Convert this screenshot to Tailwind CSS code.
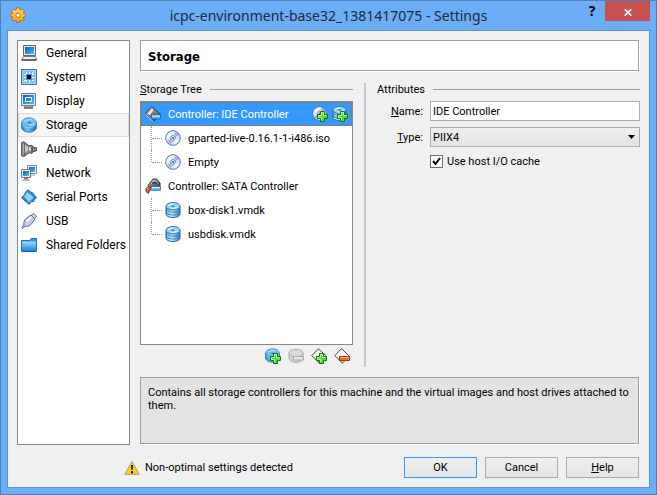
<!DOCTYPE html>
<html lang="en">
<head>
<meta charset="utf-8">
<title>icpc-environment-base32_1381417075 - Settings</title>
<script src="https://cdn.jsdelivr.net/npm/@tailwindcss/browser@4"></script>
</head>
<body class="flex min-h-screen flex-col border border-[#4c82c0] bg-[#6badf6] font-[Roboto,sans-serif] text-[11px] leading-[13px] text-black">

<!-- Shared icon shapes -->
<svg class="absolute size-0" aria-hidden="true">
  <defs>
    <linearGradient id="blue" x1="0" y1="0" x2="1" y2="1"><stop offset="0" stop-color="#0a5cc0"/><stop offset="1" stop-color="#4fc0ff"/></linearGradient>
    <linearGradient id="sky" x1="0" y1="0" x2="0" y2="1"><stop offset="0" stop-color="#9adcfb"/><stop offset="1" stop-color="#1c82d4"/></linearGradient>
    <linearGradient id="pale" x1="0" y1="0" x2="1" y2="0"><stop offset="0" stop-color="#4da6df"/><stop offset=".45" stop-color="#b4e4fd"/><stop offset="1" stop-color="#2f86c6"/></linearGradient>
    <linearGradient id="drumside" x1="0" y1="0" x2="1" y2="0"><stop offset="0" stop-color="#2a86d0"/><stop offset=".4" stop-color="#6cc4f6"/><stop offset="1" stop-color="#1a6cb8"/></linearGradient>
    <linearGradient id="metal" x1="0" y1="0" x2="1" y2="1"><stop offset="0" stop-color="#e4e4e4"/><stop offset=".5" stop-color="#777"/><stop offset="1" stop-color="#333"/></linearGradient>
    <linearGradient id="disc" x1="0" y1="0" x2="1" y2="1"><stop offset="0" stop-color="#bfe0fa"/><stop offset=".3" stop-color="#f2fbff"/><stop offset=".5" stop-color="#cdb9ee"/><stop offset=".75" stop-color="#e9f5ff"/><stop offset="1" stop-color="#8fc0ea"/></linearGradient>
    <linearGradient id="gold" x1="0" y1="0" x2="0" y2="1"><stop offset="0" stop-color="#ffe27a"/><stop offset="1" stop-color="#f29a12"/></linearGradient>
    <symbol id="plus" viewBox="0 0 11 11"><path d="M3.5.5h4v3h3v4h-3v3h-4v-3h-3v-4h3z" fill="#4fd83c" stroke="#14780f"/><path d="M4.5 9V6.5h-3v-2h3v-3h2v3h3" fill="none" stroke="#b4fba3"/></symbol>
    <symbol id="cd" viewBox="0 0 16 16"><circle cx="8" cy="8" r="7.3" fill="url(#disc)" stroke="#4379b4"/><path d="M3.2 3.6 6.6 7M9.6 9.2l3 3" stroke="#fff" stroke-width="2"/><path d="M4 10.5a5 5 0 0 0 2.5 2.3M10 3.2a5 5 0 0 1 2.7 2.6" stroke="#a58be0" fill="none" stroke-width="1.4"/><circle cx="8" cy="8" r="2.4" fill="#e9f6ff" stroke="#5c93c8"/><circle cx="8" cy="8" r="1" fill="#28578c"/></symbol>
    <symbol id="stack" viewBox="0 0 16 16"><path d="M1 4v8.2C1 14 4 15.5 8 15.5s7-1.5 7-3.3V4z" fill="url(#pale)" stroke="#2b6ca6"/><path d="M1 7.2C1 9 4 10.3 8 10.3s7-1.3 7-3.1M1 10C1 11.8 4 13 8 13s7-1.2 7-3" fill="none" stroke="#2b6ca6" stroke-width=".8"/><path d="M2 9.3c1 1.2 3 1.9 6 1.9M2 12.2c1 1.3 3 1.9 6 1.9" fill="none" stroke="#d5f1ff" stroke-width=".7"/><ellipse cx="8" cy="4.2" rx="7" ry="3.7" fill="#94d4f8" stroke="#347cae"/><path d="M3 3.8C4.5 2.2 7 2 9 2.2M6 6.2c3 .3 5-.3 6.5-1.5" stroke="#eafaff" fill="none"/><ellipse cx="8" cy="4.2" rx="1.6" ry=".8" fill="#1f6ca8"/></symbol>
    <symbol id="drum" viewBox="0 0 16 16"><path d="M.6 5.5v4.8C.6 13 4 15.2 8 15.2s7.4-2.2 7.4-4.9V5.5z" fill="url(#drumside)" stroke="#1f68a8" stroke-width=".8"/><ellipse cx="8" cy="5.4" rx="7.3" ry="4.6" fill="#6dbdf2" stroke="#3c87c2" stroke-width=".7"/><path d="M1 7.5c1.2 2 4 3.2 7 3.2s6-1.2 7-3.2" fill="none" stroke="#b5e6ff" stroke-width=".7"/><path d="M3 4.7C5 2.6 9 2.4 11 3M8 8.3c3 0 5-1 5.8-2.3" fill="none" stroke="#c9edff"/><ellipse cx="8.6" cy="5.6" rx="1.8" ry=".9" fill="#2a7cc0"/></symbol>
    <symbol id="ide" viewBox="0 0 16 16"><path d="M.5 7.5 6.7.6 15.3 8.4 8.5 15.3z" fill="url(#metal)" stroke="#333"/><path d="M2.8 7.4 6.8 2.7l1.8 1.6L4.6 9z" fill="#eaeaea"/><path d="m8 3.5 5 4.5" stroke="#999"/><path d="M.8 8.5 8.3 15.6" stroke="#fff" stroke-width=".8"/><path d="M6.5 8.9h9v3.8h-9z" fill="#e5f8ff" stroke="#1873b8"/><path d="M7 10.6h8v1.6H7z" fill="#48b5f0"/></symbol>
    <symbol id="diamond" viewBox="0 0 16 16"><path d="M.7 7.7 7.5.8 15.3 8 8.3 15.3z" fill="#fcfcfc" stroke="#444"/><path d="m1.8 8.4 6.4 6" stroke="#999"/></symbol>
  </defs>
</svg>

<header class="grid h-[29px] shrink-0 grid-cols-[1fr_auto_1fr]">
  <svg class="ml-[9px] mt-[6px] size-4" viewBox="0 0 16 16"><path d="m6.7.8 2.6 0 .4 1.9 1.2.5 1.7-1.1 1.6 1.7-1 1.7.5 1.2 2 .4v2.2l-2 .5-.5 1.1 1.1 1.8-1.7 1.6-1.7-1.1-1.2.5-.4 1.9H6.7l-.4-1.9-1.2-.5-1.8 1.1-1.6-1.6 1.1-1.8-.5-1.1-1.9-.5V7.1l1.9-.4.5-1.2-1.1-1.7 1.6-1.7 1.8 1.1 1.2-.5z" fill="url(#gold)" stroke="#ad6208" stroke-width=".8"/><circle cx="8" cy="8.2" r="2.2" fill="#fff6df" stroke="#b87418"/></svg>
  <h1 class="pt-[5px] font-['Noto_Sans',sans-serif] text-sm leading-5 text-[#1b2a3c]">icpc-environment-base32_1381417075 - Settings</h1>
  <div class="flex items-start justify-end pr-[6px]">
    <button class="h-5 w-[26px] text-center font-['Open_Sans',sans-serif] text-sm font-bold leading-5" aria-label="Help on window">?</button>
    <button class="flex h-5 w-[45px] items-center justify-center bg-[#c75050]" aria-label="Close">
      <svg class="mt-[2px] h-[7px] w-2" viewBox="0 0 8 7"><path d="M.8.3 7.2 6.7M7.2.3.8 6.7" stroke="#fff" stroke-width="1.7"/></svg>
    </button>
  </div>
</header>

<main class="mx-[6px] mb-[6px] flex flex-1 flex-col border border-[#5a93d2] bg-[#f0f0f0] p-[9px]">
  <div class="flex flex-1 gap-[10px]">
    <nav class="w-[113px] shrink-0 border border-[#828790] bg-white text-xs">
      <ul>
        <li><a href="#general" class="flex h-6 items-center gap-[9px] border border-transparent pl-[2px]">
          <svg class="size-4" viewBox="0 0 16 16"><path d="M2.5.5h12v10h-12z" fill="#e8e8e8" stroke="#666"/><path d="M4 2h9v7H4z" fill="url(#blue)"/><path d="M2.5 11.5h12l1 3H.7z" fill="#eee" stroke="#777"/><path d="M.5 15.3h15" stroke="#444"/></svg>General</a></li>
        <li><a href="#system" class="flex h-6 items-center gap-[9px] border border-transparent pl-[2px]">
          <svg class="size-4" viewBox="0 0 16 16"><path d="M.5.5h15v15H.5z" fill="#84bdf0" stroke="#3d70ae"/><path d="M1.5 1.5h13v13h-13z" fill="none" stroke="#a5d2fa"/><path d="M3 5.5h2M3 8.5h2M3 11.5h2M11 5.5h2M11 8.5h2M11 11.5h2M5.5 3v2M8.5 3v2M11.500 3v2M5.500 11v2M8.500 11v2" stroke="#fff"/><path d="M5 5h6v6H5z" fill="#4e8fd8"/><path d="M6 6h4v4H6z" fill="#071327"/></svg>System</a></li>
        <li><a href="#display" class="flex h-6 items-center gap-[9px] border border-transparent pl-[2px]">
          <svg class="size-4" viewBox="0 0 16 16"><path d="M.5.5h14v12H.5z" fill="#e7e7e7" stroke="#777"/><path d="M2 2h11v9H2z" fill="url(#blue)"/><path d="M4.500 4.500h6v4h-6z" fill="#2f83dc" stroke="#fff"/><path d="M4.5 12.5h6l1.500 2H3z" fill="#aaa" stroke="#777"/><path d="M3 15.2h9" stroke="#555"/></svg>Display</a></li>
        <li><a href="#storage" aria-current="page" class="flex h-6 items-center gap-[9px] border border-[#dedede] bg-[#f5f5f5] pl-[2px]">
          <svg class="size-4"><use href="#drum"/></svg>Storage</a></li>
        <li><a href="#audio" class="flex h-6 items-center gap-[9px] border border-transparent pl-[2px]">
          <svg class="size-4" viewBox="0 0 16 16"><path d="M.7 1.500 3 .8l5 4 3-.5.8 1.700 3.700.8v3l-3.700.9-.8 1.600-3-.5-5 3.700-2.300-.7z" fill="#8c8c8c" stroke="#4d4d4d"/><path d="M2 2.500v11l5-4.200V6.200z" fill="#c9c9c9"/><path d="M3.300 2v12" stroke="#555"/><path d="M8 6.500h2v3H8z" fill="#ddd"/><path d="M11 6v4.500" stroke="#333"/></svg>Audio</a></li>
        <li><a href="#network" class="flex h-6 items-center gap-[9px] border border-transparent pl-[2px]">
          <svg class="size-4" viewBox="0 0 16 16"><path d="M6.5.5h9v8h-9z" fill="#eee" stroke="#888"/><path d="M8 2h6v5H8z" fill="url(#blue)"/><path d="M9 9.5h5v1H9z" fill="#999"/><path d="M.5 4.5h9v8h-9z" fill="#eee" stroke="#777"/><path d="M2 6h6v5H2z" fill="url(#blue)"/><path d="M3 13h4v1H3zM1.5 14.5h7v1h-7z" fill="#777"/></svg>Network</a></li>
        <li><a href="#serial" class="flex h-6 items-center gap-[9px] border border-transparent pl-[2px]">
          <svg class="size-4" viewBox="0 0 16 16"><path d="M4.500 3 7.300.8l1.500 1.600 3 1.600 3.700 5-2.200 1-.6 2.700-2.400-.3-2 3L5.200 13 .6 8.500 3.500 6z" fill="#318acd" stroke="#285f94"/><path d="m6 3 6.800 5.500-4.300 5L2.800 7.700z" fill="#75c3f5"/><path d="m5.700 5 4.500 4.500M4.400 6.800l4 4.200M8 4.800l3 3" stroke="#c5ecff"/></svg>Serial Ports</a></li>
        <li><a href="#usb" class="flex h-6 items-center gap-[9px] border border-transparent pl-[2px]">
          <svg class="size-4" viewBox="0 0 16 16"><path d="m10 2.700 2.800-2.200 2.700 2.700-2.300 2.700z" fill="#ddd" stroke="#666"/><path d="M5 5.500 10 2l4 4-4 5.500c-2 2-4.500 2-5.800 1.800L1.500 15.500.7 14.700 3 12c-.5-2 .2-4.700 2-6.500z" fill="#c8cdee" stroke="#62668d"/><path d="M5.500 7.300 9.700 3.600l1 1L6 9.500z" fill="#fff"/></svg>USB</a></li>
        <li><a href="#shared" class="flex h-6 items-center gap-[9px] border border-transparent pl-[2px]">
          <svg class="size-4" viewBox="0 0 16 16"><path d="M.5 3.500h8l1.500-2h5.500V14H.5z" fill="#3c9ce2" stroke="#2170b4"/><path d="M1 4.500h14V14H1z" fill="url(#sky)"/><path d="M.5 14.500h15" stroke="#1c62a5"/></svg><span class="whitespace-nowrap">Shared Folders</span></a></li>
      </ul>
    </nav>

    <div class="flex min-w-0 flex-1 flex-col">
      <h2 class="mr-px h-[31px] border border-[#a0a0a0] bg-white pl-[7px] font-['DejaVu_Sans_Condensed','DejaVu_Sans',sans-serif] text-[13px] font-bold leading-[31px] shadow-[1px_1px_0_#fff]">Storage</h2>

      <div class="grid flex-1 grid-cols-[213fr_2px_263fr] gap-[11px] pb-[10px] pt-3">
        <section class="flex flex-col pb-[3px]">
          <h3 class="flex items-center gap-2"><span><u>S</u>torage Tree</span><span class="h-px flex-1 bg-[#a0a0a0]"></span></h3>
          <div class="mt-[5px] flex-1 border border-[#828790] bg-white">
            <ul>
              <li>
                <div class="flex h-6 items-center border border-dotted border-[#cc6600] bg-[#3399ff] px-[3px] text-white">
                  <svg class="mr-[7px] size-4"><use href="#ide"/></svg>
                  <span class="flex-1">Controller: IDE Controller</span>
                  <button class="mr-1 size-4" aria-label="Add CD/DVD device"><svg class="size-4" viewBox="0 0 16 16"><use href="#cd" width="15" height="15"/><use href="#plus" x="5" y="5" width="11" height="11"/></svg></button>
                  <button class="size-4" aria-label="Add hard disk"><svg class="size-4" viewBox="0 0 16 16"><use href="#stack" width="15" height="15"/><use href="#plus" x="5" y="5" width="11" height="11"/></svg></button>
                </div>
                <ul class="pl-[10px]">
                  <li class="flex h-6 items-center">
                    <span class="h-full border-l border-dotted border-[#999]"></span><span class="mr-[3px] w-[10px] border-t border-dotted border-[#999]"></span>
                    <svg class="mr-[7px] size-4"><use href="#cd"/></svg>gparted-live-0.16.1-1-i486.iso</li>
                  <li class="flex h-6 items-center">
                    <span class="h-3 self-start border-l border-dotted border-[#999]"></span><span class="mr-[3px] w-[10px] border-t border-dotted border-[#999]"></span>
                    <svg class="mr-[7px] size-4"><use href="#cd"/></svg>Empty</li>
                </ul>
              </li>
              <li>
                <div class="flex h-6 items-center pl-1">
                  <svg class="mr-[7px] size-4" viewBox="0 0 16 16"><path d="M3 7.500 8 1h3.500L15 5v5H5z" fill="url(#metal)" stroke="#333"/><path d="m6 6 2.500-3.300h2L13 5.500" fill="none" stroke="#bbb"/><path d="M7 5h5" stroke="#222"/><path d="M6.500 8.500h8.800v3.800H5.500z" fill="#e7f8ff" stroke="#1873b8"/><path d="M6.500 10.200H15v1.600H6z" fill="#3ba6e8"/><path d="M1 10.500 3.700 8.300l2 2.200-1.400 2.200L3.500 15.500 1 13.600z" fill="#e95625" stroke="#97300f"/><path d="m2 11 1.700-1.300" stroke="#ffb08f"/></svg>Controller: SATA Controller</div>
                <ul class="pl-[10px]">
                  <li class="flex h-6 items-center">
                    <span class="h-full border-l border-dotted border-[#999]"></span><span class="mr-[3px] w-[10px] border-t border-dotted border-[#999]"></span>
                    <svg class="mr-[7px] size-4"><use href="#stack"/></svg>box-disk1.vmdk</li>
                  <li class="flex h-6 items-center">
                    <span class="h-3 self-start border-l border-dotted border-[#999]"></span><span class="mr-[3px] w-[10px] border-t border-dotted border-[#999]"></span>
                    <svg class="mr-[7px] size-4"><use href="#stack"/></svg>usbdisk.vmdk</li>
                </ul>
              </li>
            </ul>
          </div>
          <div class="mt-[3px] flex justify-end gap-[7px] pr-[3px]">
            <button class="size-4" aria-label="Add attachment"><svg class="size-4" viewBox="0 0 16 16"><use href="#drum" width="15" height="15"/><use href="#plus" x="5" y="5" width="11" height="11"/></svg></button>
            <button class="size-4" aria-label="Remove attachment" disabled><svg class="size-4" viewBox="0 0 16 16"><path d="M1 5v5c0 2.500 3 4.300 7 4.300s7-1.800 7-4.300V5z" fill="#d0d0d0" stroke="#aaa"/><ellipse cx="8" cy="5" rx="7" ry="3.700" fill="#dcdcdc" stroke="#b0b0b0"/><path d="M5.500 8.500h10v3.500h-10z" fill="#e8e8e8" stroke="#aaa"/></svg></button>
            <button class="size-4" aria-label="Add controller"><svg class="size-4" viewBox="0 0 16 16"><use href="#diamond" width="16" height="16"/><use href="#plus" x="5" y="5" width="11" height="11"/></svg></button>
            <button class="size-4" aria-label="Remove controller"><svg class="size-4" viewBox="0 0 16 16"><use href="#diamond" width="16" height="16"/><path d="M5.500 8.500h10v4h-10z" fill="#f2682e" stroke="#b53a0c"/><path d="M6.500 9.500h8" stroke="#ffb28f"/></svg></button>
          </div>
        </section>

        <div class="bg-[#c8c8c8]"></div>

        <section>
          <h3 class="flex items-center gap-2">Attributes<span class="h-px flex-1 bg-[#a0a0a0]"></span></h3>
          <div class="mt-[5px] grid grid-cols-[46px_1fr] items-center gap-x-[7px] gap-y-[6px]">
            <label for="name" class="text-right"><u>N</u>ame:</label>
            <input id="name" type="text" value="IDE Controller" class="h-5 w-full min-w-0 border border-[#abadb3] bg-white px-[2px]">
            <label for="type" class="text-right"><u>T</u>ype:</label>
            <div class="relative">
              <select id="type" class="block h-5 w-full appearance-none border border-[#acacac] bg-linear-to-b from-[#eeeeee] to-[#e3e3e3] px-[2px]"><option>PIIX4</option></select>
              <svg class="pointer-events-none absolute right-[5px] top-2 h-1 w-[7px]" viewBox="0 0 7 4"><path d="M0 0h7L3.500 4z"/></svg>
            </div>
            <label class="col-start-2 flex items-center gap-1 pt-[2px]">
              <input type="checkbox" checked class="size-[13px] appearance-none border border-[#707070] bg-white bg-[url('data:image/svg+xml,%3Csvg%20xmlns=%22http://www.w3.org/2000/svg%22%20viewBox=%220%200%2011%2011%22%3E%3Cpath%20d=%22M2%205l2.5%203L9%202%22%20fill=%22none%22%20stroke=%22%23000%22%20stroke-width=%222%22/%3E%3C/svg%3E')]">
              Use host I/O cache</label>
          </div>
        </section>
      </div>

      <p class="mb-px mr-px h-[67px] border border-[#a0a0a0] bg-[#e3e3e3] px-[7px] pt-2 shadow-[1px_1px_0_#fff]">Contains all storage controllers for this machine and the virtual images and host drives attached to them.</p>
    </div>
  </div>

  <footer class="mr-px mt-3 flex h-[21px] items-center justify-end gap-2">
    <p class="mr-auto flex items-center gap-[5px] pl-[107px]">
      <svg class="size-4" viewBox="0 0 16 16"><path d="M8 1.200 15.300 14.400H.7z" fill="#f7cc1c" stroke="#aaa38a" stroke-linejoin="round"/><path d="M7 5h2l-.4 5H7.400zM7 11.300h2v1.900H7z" fill="#111"/></svg>
      Non-optimal settings detected</p>
    <button class="h-[21px] w-[73px] border border-[#3399ff] bg-linear-to-b from-[#efefef] to-[#e5e5e5]">OK</button>
    <button class="h-[21px] w-[73px] border border-[#acacac] bg-linear-to-b from-[#efefef] to-[#e5e5e5]">Cancel</button>
    <button class="h-[21px] w-[73px] border border-[#acacac] bg-linear-to-b from-[#efefef] to-[#e5e5e5]"><u>H</u>elp</button>
  </footer>
</main>
</body>
</html>
